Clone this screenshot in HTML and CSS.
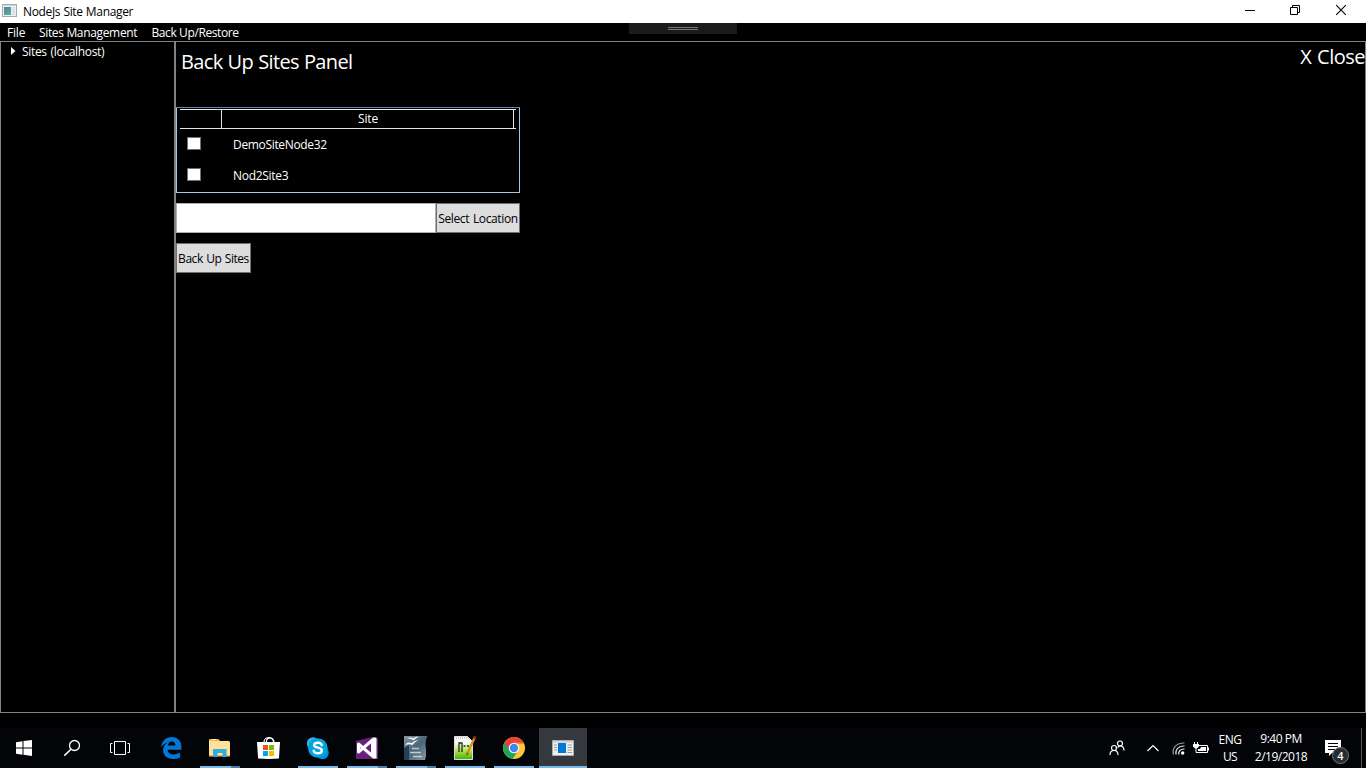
FILE: index.html
```html
<!DOCTYPE html>
<html lang="en">
<head>
<meta charset="utf-8">
<title>NodeJs Site Manager</title>
<link rel="stylesheet" href="styles.css">
</head>
<body>
<div class="screen">
  <header class="titlebar">
    <svg class="app-icon" width="16" height="14" viewBox="0 0 16 14"><defs><linearGradient id="ag" x2="0.6" y2="1"><stop stop-color="#4a7fb0"/><stop offset="1" stop-color="#5fae84"/></linearGradient></defs><rect x=".5" y=".5" width="14" height="12" fill="#eef1f3" stroke="#a5aaae"/><path d="M1 1.5h13" stroke="#d0d4d8"/><rect x="2" y="3" width="7" height="8" fill="url(#ag)"/><rect x="10" y="3" width="3" height="8" fill="#d5e5ec"/></svg>
    <span class="app-title">NodeJs Site Manager</span>
    <div class="window-buttons">
      <svg width="46" height="23"><path d="M19 10.5h10" stroke="#000"/></svg>
      <svg width="46" height="23"><path d="M18.500 7.500h7v7h-7zM20.500 7v-1.500h7v7h-2" fill="none" stroke="#000"/></svg>
      <svg width="46" height="23"><path d="M18.200 5.200l9.600 9.600M27.800 5.200l-9.600 9.600" stroke="#000" stroke-width="1.100"/></svg>
    </div>
  </header>
  <nav class="menu">
    <span class="menu-file">File</span>
    <span class="menu-sites">Sites Management</span>
    <span class="menu-backup">Back Up/Restore</span>
    <div class="grip"><i></i><i></i></div>
  </nav>
  <main class="workspace">
    <aside class="tree">
      <div class="tree-item"><svg width="5" height="8"><path d="M0 0L4.500 4L0 8z" fill="#fff"/></svg><span>Sites (localhost)</span></div>
    </aside>
    <section class="panel">
      <div class="panel-head"><h1>Back Up Sites Panel</h1><span class="close">X Close</span></div>
      <div class="site-list">
        <div class="list-header"><span></span><span class="site-col">Site</span></div>
        <div class="list-row"><i class="check"></i><span class="demo-name">DemoSiteNode32</span></div>
        <div class="list-row"><i class="check"></i><span class="nod-name">Nod2Site3</span></div>
      </div>
      <div class="location"><div class="path"></div><button class="btn select">Select Location</button></div>
      <button class="btn backup">Back Up Sites</button>
    </section>
  </main>
  <footer class="taskbar">
    <div class="slot"><svg width="48" height="40"><path d="M16 14.300l6.500-1v6.200H16zM23.500 13.100l8.500-1.100v7.500h-8.500zM16 20.500h6.500v6.300L16 25.800zM23.500 20.500H32V28l-8.500-1.200z" fill="#fff"/></svg></div>
    <div class="slot"><svg width="48" height="40"><circle cx="26.500" cy="17.500" r="5" fill="none" stroke="#fff" stroke-width="1.300"/><path d="M23 21.300l-6.700 6.300" stroke="#fff" stroke-width="1.500"/></svg></div>
    <div class="slot"><svg width="48" height="40"><path d="M18.500 13.500h11v13h-11zM16.500 15.500h-2v9h2M31.500 15.500h2v9h-2" fill="none" stroke="#fff"/></svg></div>
    <div class="slot edge"><svg width="48" height="40"><path d="M14 19.500C15 12.500 19 9 24.700 9C31 9 34.400 13.400 34.400 19v2.700H20.600c.2 3.600 3.200 4.700 6.100 4.700c2.400 0 4.500-.7 6.400-1.800v4.800c-2.200 1.200-4.600 1.700-7.200 1.700c-6.100 0-9.800-3.500-9.800-9c0-3.700 2-6.300 5.500-7.800c-3.500.7-5.900 2.500-7.600 5.200zM20.800 17.600h7.600c0-2.600-1.200-4.200-3.700-4.200c-2.200 0-3.600 1.700-3.900 4.200z" fill="#0078d7"/></svg></div>
    <div class="slot multi"><svg width="48" height="40"><path d="M13 12l1-1h8l2 2h9l1 1v14H13z" fill="#ffe29a"/><path d="M14 11h8l1 2h-9z" fill="#f6b92c"/><path d="M16 11h4v1h-4z" fill="#fff"/><path d="M13 27h21v1.500H13z" fill="#eebf55"/><path d="M17 29v-8h13.500v8h-4v-4h-5v4z" fill="#2eaee4"/></svg></div>
    <div class="slot"><svg width="48" height="40"><path d="M19 16v-2c0-6 10-6 10 0v2M21.500 15v-2c0-4 7-4 7 1" fill="none" stroke="#fff" stroke-width="1.200"/><path d="M12 14h23l-1 16.500l-10 .5l-11-.5z" fill="#fff"/><path d="M18 17h5v5h-5z" fill="#f25022"/><path d="M24 17h5v5h-5z" fill="#7fba00"/><path d="M18 23h5v5h-5z" fill="#00a4ef"/><path d="M24 23h5v5h-5z" fill="#ffb900"/></svg></div>
    <div class="slot run"><svg width="48" height="40"><circle cx="19" cy="15.500" r="6.200" fill="#30b3e8"/><circle cx="28.500" cy="24.700" r="6.300" fill="#0095d5"/><circle cx="23.800" cy="20" r="9.800" fill="#00a4df"/><path d="M27.700 17c-.5-1.600-1.900-2.200-3.800-2.200c-2.200 0-3.700.9-3.700 2.500c0 3.200 7.600 1.500 7.600 5.100c0 1.800-1.600 2.800-3.900 2.800c-2.100 0-3.900-.8-4.200-2.500" fill="none" stroke="#fff" stroke-width="2.400" stroke-linecap="round"/></svg></div>
    <div class="slot multi"><svg width="48" height="40"><path d="M13 13L29 9l6 2v20H13z" fill="#68217a"/><path d="M15.500 16v8L29.500 12v16z" fill="none" stroke="#fff" stroke-width="3" stroke-linejoin="round"/><path d="M31.500 9.500v21" stroke="#fff" stroke-width="4"/></svg></div>
    <div class="slot multi"><svg width="48" height="40"><defs><linearGradient id="oo" x2="1" y2="1"><stop stop-color="#8497a3"/><stop offset=".5" stop-color="#4c6576"/><stop offset="1" stop-color="#8b9fab"/></linearGradient></defs><path d="M12 8h23.500c-2.500 5-2 9-1.500 14c.3 4 0 7-1 10H12z" fill="url(#oo)"/><path d="M12 20l5-3v15h-5z" fill="#234153"/><path d="M15 10c3-1 5-.5 6 .5c2-1.500 4-2 6-1.500c-3 .5-4 2-5.500 3.500c-1.500-1.500-3.500-2-6.500-2.500zM13 17c2-3 5-3 7-2c2-2 4-2.500 6-2.500c-3 1.500-4 2.500-5.500 4.500c-2-1-4.500-1-7.500 0z" fill="#fff"/><path d="M20 20.500h7M18 24.500h11M21 28.500h9" stroke="#bdcbd4" stroke-width="1.500"/></svg></div>
    <div class="slot run"><svg width="48" height="40"><defs><linearGradient id="np" x2="0" y2="1"><stop offset=".3" stop-color="#f6f9ef"/><stop offset=".65" stop-color="#a5df3c"/><stop offset="1" stop-color="#46ad11"/></linearGradient></defs><path d="M13.500 8.500h13l5 5v18h-18z" fill="url(#np)" stroke="#ddd"/><path d="M15 10h14" stroke="#aaa" stroke-dasharray="1 1"/><path d="M18 24v-9h3v9M22.500 18h2M26 18h2" fill="none" stroke="#252525" stroke-width="1.300"/><path d="M26 26l7.500-16" stroke="#d59419" stroke-width="2.500"/><path d="M33 11l1.200-2.500" stroke="#a42b23" stroke-width="3"/><path d="M25.500 27.500l.2-3l2 1z" fill="#544"/></svg></div>
    <div class="slot run"><svg width="48" height="40"><circle cx="24" cy="20" r="11" fill="#fcc934"/><path d="M24 20L14.470 14.500A11 11 0 0 0 22.500 30.900L28.300 22.500z" fill="#20a35b"/><path d="M24 20l-4.300 2.500L14.470 14.500A11 11 0 0 1 33.530 14.500H24z" fill="#e94235"/><path d="M24 15h9.700" stroke="#e94235"/><circle cx="24" cy="20" r="5.300" fill="#fff"/><circle cx="24" cy="20" r="4.200" fill="#4285f4"/></svg></div>
    <div class="slot active"><svg width="48" height="40"><path d="M13.500 12.500h21v15h-21z" fill="#f2f2f2" stroke="#aaa"/><path d="M14 13h20v2H14z" fill="#d4d7da"/><path d="M19 15h8v10h-8z" fill="#0078d7"/><path d="M15 17h3M15 19.500h3M15 22h3M28.500 17h4.500M28.500 19.500h4.500M28.500 22h4.500M28.500 24.500h4.500" stroke="#999"/></svg></div>
    <div class="tray">
      <svg class="people" width="16" height="16"><g fill="none" stroke="#fff" stroke-width="1.200"><circle cx="5" cy="8" r="2.500"/><path d="M1 15c0-6 8-6 8 0"/><circle cx="11" cy="3.500" r="2.500"/><path d="M8.500 7.500c3-3 6.500-1.500 6.500 3"/></g></svg>
      <svg class="chevron" width="14" height="8"><path d="M1.500 7L7 1.500L12.500 7" fill="none" stroke="#fff" stroke-width="1.200"/></svg>
      <svg class="wifi" width="13" height="13"><g fill="none" stroke="#999" stroke-width="1.200"><path d="M1.500 12.500C-.5 6 5 .7 12.500 1"/><path d="M4 12.500c-1-5 2.500-8.700 8.500-8.500" stroke="#ddd"/><path d="M6.700 12.500c-.5-3.500 2-5.700 5.800-5.500" stroke="#fff"/></g><circle cx="10.700" cy="11" r="1.700" fill="#fff"/></svg>
      <svg class="battery" width="17" height="13"><path d="M6 3.500h8.500v7H5.500M3 6v4.500h3M15.500 5.500v3M1.500 0v3M4.500 0v3" fill="none" stroke="#fff"/><path d="M0 2h6v2.500L4 6.500H2L0 4.500zM8 5h5v4H5V7h2z" fill="#fff"/></svg>
      <div class="lang"><span class="eng">ENG</span><span class="us">US</span></div>
      <div class="clock"><span class="time">9:40 PM</span><span class="date">2/19/2018</span></div>
      <div class="notice"><svg width="16" height="17"><path d="M0 0h16v13H7l-3 3v-3H0z" fill="#fff"/><path d="M3 3.500h10M3 6.500h10M3 9.500h7" stroke="#000"/></svg><b>4</b></div>
      <i class="desktop-edge"></i>
    </div>
  </footer>
</div>
</body>
</html>
```
FILE: styles.css
```css
* { box-sizing: border-box; }
body { margin: 0; overflow: hidden; background: #000; color: #fff; font: 12px/16px "Open Sans", "Noto Sans", sans-serif; }
svg { display: block; flex: none; }
span { white-space: nowrap; }
.screen { width: 1366px; height: 768px; display: flex; flex-direction: column; }
.titlebar { height: 23px; flex: none; display: flex; background: #fff; color: #000; padding-left: 2px; }
.app-icon { margin-top: 4px; }
.app-title { margin: 4px 0 0 5px; letter-spacing: -.34px; word-spacing: .4px; }
.window-buttons { display: flex; margin-left: auto; margin-right: 2px; }
.menu { height: 18px; flex: none; position: relative; display: flex; padding: 2px 0 0 7px; }
.menu-file { width: 32px; letter-spacing: -.2px; }
.menu-sites { width: 112px; letter-spacing: -.34px; }
.menu-backup { padding-left: .5px; letter-spacing: -.4px; }
.grip { position: absolute; left: 629px; top: 0; width: 108px; height: 11px; background: #1b1b1b; padding: 4px 39px; }
.grip i { display: block; height: 1px; background: #777; margin-bottom: 1px; }
.workspace { height: 672px; flex: none; display: flex; }
.tree { width: 175px; border: 1px solid #828282; padding: 2px 0 0 10px; }
.tree-item { display: flex; align-items: center; gap: 6px; letter-spacing: -.33px; word-spacing: 1px; }
.tree-item svg { margin-bottom: 2px; }
.panel { flex: 1; border: 1px solid #828282; min-width: 0; }
.panel-head { height: 65px; display: flex; justify-content: space-between; padding-left: 5px; }
h1 { margin: 6px 0 0; font-size: 20px; line-height: 28px; font-weight: 400; letter-spacing: -.66px; word-spacing: .6px; white-space: nowrap; }
.close { margin: 1px 0 0; font-size: 20px; line-height: 28px; letter-spacing: -.5px; word-spacing: 1px; }
.site-list { width: 344px; height: 86px; border: 1px solid #a9c6de; border-top-color: #5c88b4; padding: 1px 3px; border-radius: 1px; }
.list-header { height: 20px; display: grid; grid-template-columns: 42px 292px 2px; border: solid #e5e5e5; border-width: 1px 0; }
.list-header span { border-right: 1px solid #e5e5e5; text-align: center; line-height: 18px; }
.list-header .site-col { letter-spacing: -.15px; padding-left: 1px; }
.list-row { height: 31px; display: flex; align-items: center; padding-left: 7px; }
.check { width: 14px; height: 13px; background: #fff; border: 1px solid #707070; margin: 0 32px 2px 0; }
.demo-name { letter-spacing: -.33px; }
.nod-name { letter-spacing: -.3px; }
.location { display: flex; width: 344px; margin: 10px 0; }
.path { width: 260px; height: 30px; background: #fff; border: 1px solid #abadb3; }
.btn { display: block; height: 30px; padding: 1px 0 0; border: 1px solid #707070; background: #ddd; color: #000; font: inherit; white-space: nowrap; }
.select { width: 84px; letter-spacing: -.36px; word-spacing: 1px; }
.backup { width: 75px; letter-spacing: -.46px; word-spacing: .8px; }
.taskbar { height: 40px; margin-top: 15px; flex: none; display: flex; background: #020408; }
.slot { width: 48px; height: 40px; flex: none; position: relative; margin-right: 1px; }
.slot:nth-child(-n+3) { margin-right: 0; }
.edge { margin-left: 3px; }
.run::after, .multi::after { content: ""; position: absolute; left: 4px; bottom: 0; width: 40px; height: 2px; background: #76b9ed; }
.multi::after { background: linear-gradient(90deg, #76b9ed 31px, #4a7da8 31px); }
.active { background: #35383c; border-bottom: 2px solid #76b9ed; }
.tray { margin-left: auto; width: 257px; display: flex; align-items: flex-start; font-size: 12px; }
.people { margin-top: 12px; }
.chevron { margin: 16px 0 0 21px; }
.wifi { margin: 14px 0 0 12px; }
.battery { margin: 14px 0 0 8px; }
.lang, .clock { display: flex; flex-direction: column; align-items: center; }
.lang { width: 24px; margin: 3px 0 0 8px; line-height: 17px; }
.eng { letter-spacing: -.5px; }
.us { letter-spacing: -.7px; }
.clock { width: 54px; margin: 2px 0 0 12px; line-height: 18px; }
.time { letter-spacing: -.5px; }
.date { letter-spacing: -.5px; }
.notice { position: relative; margin: 12px 0 0 17px; }
.notice b { position: absolute; left: 7px; top: 7px; width: 17px; height: 17px; border: 1px solid #777; border-radius: 50%; background: #292b2e; font-size: 11px; line-height: 15px; text-align: center; font-weight: 600; }
.desktop-edge { width: 1px; height: 40px; background: #54565a; margin-left: auto; margin-right: 4px; }
```
